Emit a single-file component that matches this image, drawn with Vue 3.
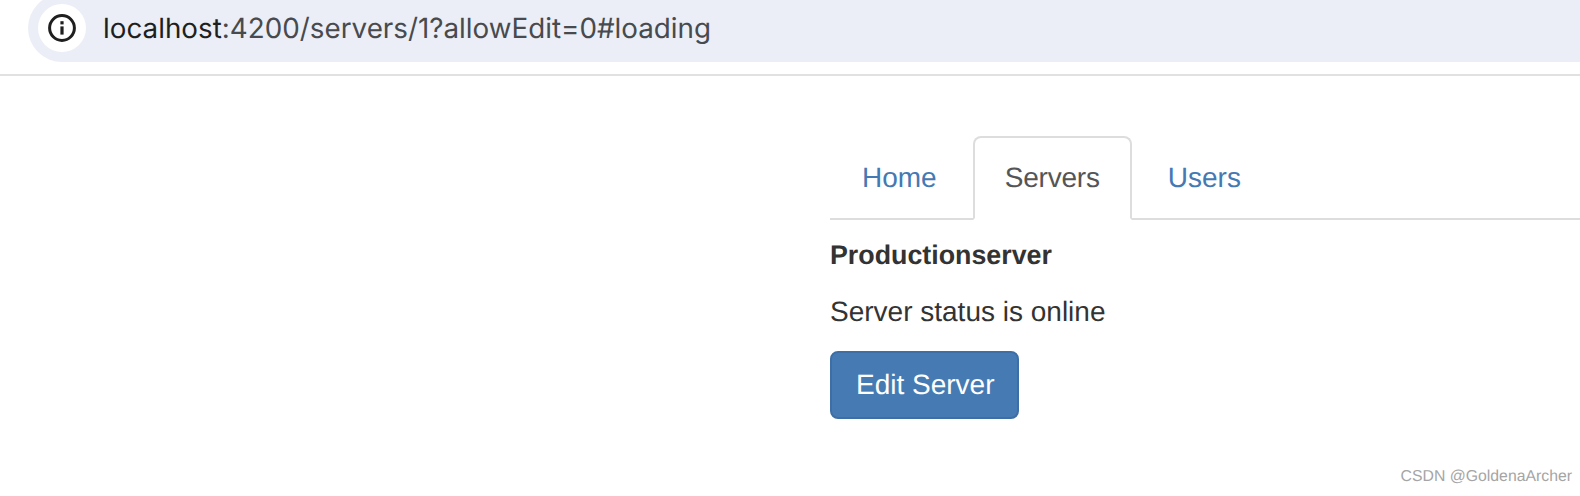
<script setup>
const tabs = [
  { label: 'Home', active: false },
  { label: 'Servers', active: true },
  { label: 'Users', active: false },
]
</script>

<template>
  <div class="page">
    <header class="toolbar">
      <div class="omnibox">
        <span class="chip">
          <svg width="28" height="28" viewBox="0 0 28 28" fill="none">
            <circle cx="14" cy="14" r="12.4" stroke="#1f1f1f" stroke-width="3" />
            <rect x="12.4" y="12.4" width="3.2" height="8.2" fill="#1f1f1f" />
            <rect x="12.4" y="7.2" width="3.2" height="3.2" fill="#1f1f1f" />
          </svg>
        </span>
        <span class="url"><span class="host">localhost</span>:4200/servers/1?allowEdit=0#loading</span>
      </div>
    </header>
    <main class="content">
      <ul class="tabs">
        <li v-for="tab in tabs" :key="tab.label" class="tab" :class="{ active: tab.active }">{{ tab.label }}</li>
      </ul>
      <h5 class="name">Productionserver</h5>
      <p class="status">Server status is online</p>
      <button class="edit" type="button">Edit Server</button>
    </main>
    <span class="mark">CSDN @GoldenaArcher</span>
  </div>
</template>

<style>
html, body { margin: 0; background: #fff; }
</style>

<style scoped>
.page {
  position: relative;
  width: 1580px;
  height: 496px;
  overflow: hidden;
  background: #fff;
  font-family: "Liberation Sans", Arial, sans-serif;
  color: #333;
  text-rendering: geometricPrecision;
}
.toolbar {
  display: flow-root;
  height: 74px;
  border-bottom: 2px solid #e1e1e1;
  padding-left: 28px;
}
.omnibox {
  display: flex;
  align-items: center;
  height: 68px;
  margin-top: -6px;
  padding-left: 10px;
  border-radius: 34px 0 0 34px;
  background: #ebeef6;
}
.chip {
  display: flex;
  align-items: center;
  justify-content: center;
  width: 48px;
  height: 48px;
  border-radius: 50%;
  background: #fff;
}
.url {
  margin-left: 17px;
  font-family: Inter, "Liberation Sans", sans-serif;
  font-size: 27.8px;
  color: #474a4e;
  white-space: nowrap;
}
.host { color: #1f1f1f; }
.content {
  padding: 60px 0 0 830px;
}
.tabs {
  display: flex;
  margin: 0;
  padding: 0;
  list-style: none;
  border-bottom: 2px solid #ddd;
  height: 82px;
}
.tab {
  height: 84px;
  box-sizing: border-box;
  margin-right: 4px;
  padding: 20px 30px;
  border: 2px solid transparent;
  border-radius: 8px 8px 0 0;
  font-size: 28px;
  line-height: 40px;
  color: #4479b3;
}
.tab.active {
  border-color: #ddd;
  border-bottom-color: #fff;
  color: #555;
  letter-spacing: -0.2px;
}
.name {
  margin: 17px 0 0;
  font-size: 26.8px;
  line-height: 36px;
  font-weight: 700;
  color: #333;
}
.status {
  margin: 19px 0 0;
  font-size: 28px;
  line-height: 40px;
}
.edit {
  display: block;
  margin-top: 19px;
  box-sizing: border-box;
  padding: 12px 22px 12px 24px;
  border: 2px solid #3d6fa6;
  border-radius: 8px;
  background: #467ab3;
  color: #fff;
  font: 28px/40px "Liberation Sans", Arial, sans-serif;
  text-rendering: geometricPrecision;
}
.mark {
  position: absolute;
  right: 8px;
  top: 467px;
  font-size: 15.8px;
  line-height: 20px;
  color: #a5a5a5;
  white-space: nowrap;
}
</style>
